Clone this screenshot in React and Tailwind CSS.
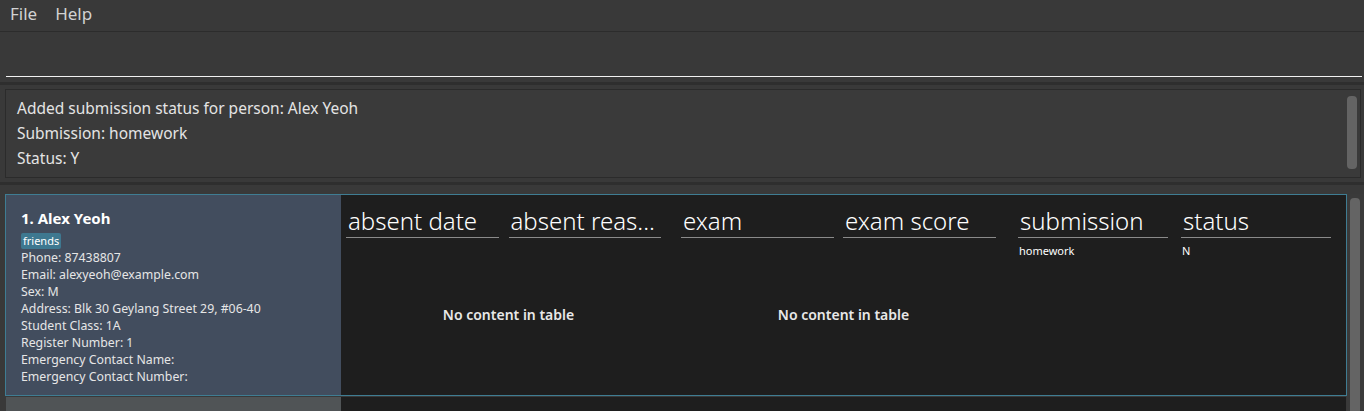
import React from "react";

const FONT = { fontFamily: '"Segoe UI", "Noto Sans", "Open Sans", sans-serif' };

function Table({ cols, rows, width, colW, gap }) {
  return (
    <div className="flex flex-col shrink-0" style={{ width }}>
      <div className="flex" style={{ gap }}>
        {cols.map((c) => (
          <div key={c} className="border-b border-[#8a8a8a] h-[43px] flex items-end pb-[4px] pl-[2px]" style={{ width: colW }}>
            <span className="text-[24px] font-light text-white leading-none whitespace-nowrap">{c}</span>
          </div>
        ))}
      </div>
      {rows ? (
        <div className="flex pt-[5px]" style={{ gap }}>
          {rows.map((r, i) => (
            <div key={i} className="text-[11px] text-white pl-[1px] leading-[16px]" style={{ width: colW }}>{r}</div>
          ))}
        </div>
      ) : (
        <div className="flex justify-center pt-[67px] pl-[10px]">
          <span className="text-[14px] font-semibold text-[#e8e8e8] leading-[20px]">No content in table</span>
        </div>
      )}
    </div>
  );
}

function Card({ selected, showRows }) {
  return (
    <div className={`flex h-[202px] shrink-0 ${selected ? "border border-[#3f7d93]" : "border border-transparent"}`}>
      <div className={`w-[335px] shrink-0 ${selected ? "bg-[#424d5e]" : "bg-[#505456]"} pl-[15px] pt-[13px]`}>
        <div className="text-[15px] font-bold text-white leading-[20px]">1. Alex Yeoh</div>
        <div className="flex mt-[5px] mb-[0px]">
          <span className="bg-[#3e7890] text-white text-[11px] leading-[16px] px-[2px] rounded-[2px]">friends</span>
        </div>
        <div className="text-[12.3px] text-[#e6e6e6] leading-[17px]">
          <div>Phone: 87438807</div>
          <div>Email: alexyeoh@example.com</div>
          <div>Sex: M</div>
          <div>Address: Blk 30 Geylang Street 29, #06-40</div>
          <div>Student Class: 1A</div>
          <div>Register Number: 1</div>
          <div>Emergency Contact Name:</div>
          <div>Emergency Contact Number:</div>
        </div>
      </div>
      <div className="flex-1 bg-[#1e1e1e] flex pl-[5px]">
        <Table cols={["absent date", "absent reas..."]} width={315} colW={153} gap={10} />
        <div className="w-[20px] shrink-0" />
        <Table cols={["exam", "exam score"]} width={315} colW={153} gap={9} />
        <div className="w-[22px] shrink-0" />
        <Table cols={["submission", "status"]} width={313} colW={150} gap={13} rows={showRows ? ["homework", "N"] : null} />
      </div>
    </div>
  );
}

export default function App() {
  return (
    <div className="w-[1364px] h-[411px] overflow-hidden bg-[#393939] flex flex-col" style={FONT}>
      {/* menu */}
      <div className="h-[32px] shrink-0 flex items-center pl-[10px] pb-[4px] gap-[18px] border-b border-[#2c2c2c] text-[17px] text-[#d2d2d2]">
        <span>File</span>
        <span>Help</span>
      </div>
      {/* command box */}
      <div className="h-[53px] shrink-0 flex flex-col justify-end px-[6px] pr-[2px] pb-[5px] border-b-[3px] border-[#2e2e2e]">
        <div className="h-[1px] bg-[#f2f2f2]" />
      </div>
      {/* result display */}
      <div className="h-[100px] shrink-0 pl-[5px] pr-[3px] pt-[4px] pb-[4px] border-b-[3px] border-[#2e2e2e]">
        <div className="h-full border border-[#2b2b2b] bg-[#3a3a3a] flex">
          <div className="flex-1 pl-[11px] pt-[6px] text-[15.5px] text-[#e4e4e4] leading-[25px]">
            <div>Added submission status for person: Alex Yeoh</div>
            <div>Submission: homework</div>
            <div>Status: Y</div>
          </div>
          <div className="w-[10px] mr-[3px] mt-[6px] mb-[8px] rounded-[4px] bg-[#646464]" />
        </div>
      </div>
      {/* list */}
      <div className="flex-1 flex pl-[5px] pt-[9px] min-h-0">
        <div className="w-[1342px] shrink-0 flex flex-col">
          <Card selected showRows />
          <Card showRows />
        </div>
        <div className="w-[17px] shrink-0 bg-[#3a3a3a] pt-[4px] pl-[3px] pr-[4px]">
          <div className="h-full rounded-t-[4px] bg-[#646464]" />
        </div>
      </div>
    </div>
  );
}
